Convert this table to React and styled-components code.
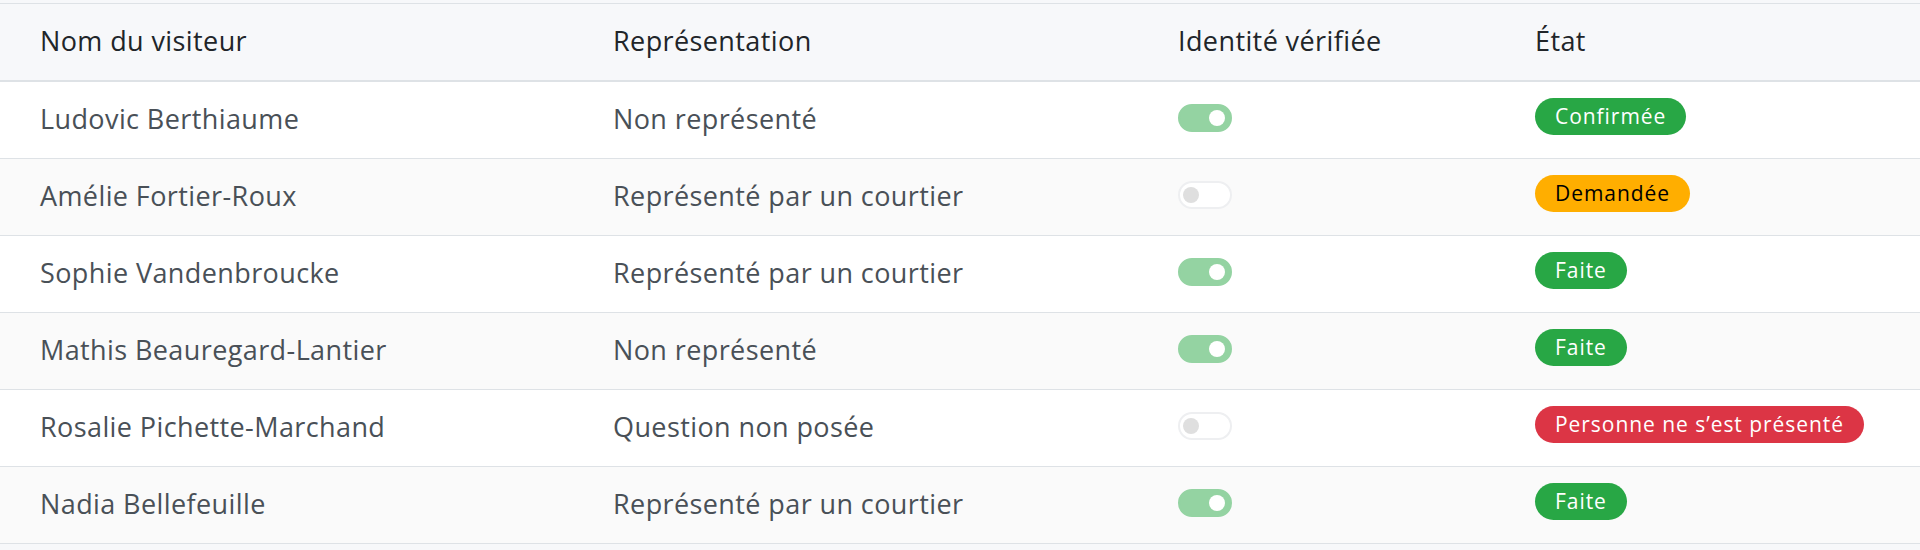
import styled, { createGlobalStyle } from 'styled-components';

const GlobalStyle = createGlobalStyle`
  body {
    margin: 0;
    background: #f7f8fa;
    font-family: "Open Sans", Lato, sans-serif;
  }
`;

const visitors = [
  { name: 'Ludovic Berthiaume', rep: 'Non représenté', verified: true, state: 'confirmed' },
  { name: 'Amélie Fortier-Roux', rep: 'Représenté par un courtier', verified: false, state: 'requested' },
  { name: 'Sophie Vandenbroucke', rep: 'Représenté par un courtier', verified: true, state: 'done' },
  { name: 'Mathis Beauregard-Lantier', rep: 'Non représenté', verified: true, state: 'done' },
  { name: 'Rosalie Pichette-Marchand', rep: 'Question non posée', verified: false, state: 'noshow' },
  { name: 'Nadia Bellefeuille', rep: 'Représenté par un courtier', verified: true, state: 'done' },
];

const states = {
  confirmed: { label: 'Confirmée', bg: '#28a745', color: '#fff' },
  requested: { label: 'Demandée', bg: '#ffae00', color: '#000' },
  done: { label: 'Faite', bg: '#28a745', color: '#fff' },
  noshow: { label: 'Personne ne s’est présenté', bg: '#dc3545', color: '#fff' },
};

const App = () => {
  return (
    <>
      <GlobalStyle />
      <Table>
        <HeadRow>
          <HeadCell>Nom du visiteur</HeadCell>
          <HeadCell>Représentation</HeadCell>
          <HeadCell>Identité vérifiée</HeadCell>
          <HeadCell>État</HeadCell>
        </HeadRow>
        {visitors.map((v, i) => (
          <Row key={v.name} $striped={i % 2 === 1}>
            <Cell>{v.name}</Cell>
            <Cell>{v.rep}</Cell>
            <Cell>
              <Switch $on={v.verified} />
            </Cell>
            <Cell>
              <Badge $bg={states[v.state].bg} $color={states[v.state].color}>
                {states[v.state].label}
              </Badge>
            </Cell>
          </Row>
        ))}
      </Table>
    </>
  );
};

export default App;

const Table = styled.div`
  margin-top: 3px;
  border-top: 1px solid #dee2e6;
  background: #fff;
`;

const columns = '573px 565px 357px 1fr';

const HeadRow = styled.div`
  display: grid;
  box-sizing: border-box;
  grid-template-columns: ${columns};
  height: 78px;
  padding-bottom: 4px;
  align-items: center;
  background: #f7f8fa;
  border-bottom: 2px solid #dee2e6;
`;

const HeadCell = styled.div`
  padding-left: 40px;
  font-size: 27px;
  font-weight: 500;
  letter-spacing: 0.4px;
  color: #212529;
`;

const Row = styled.div`
  display: grid;
  box-sizing: border-box;
  grid-template-columns: ${columns};
  height: 77px;
  padding-bottom: 4px;
  align-items: center;
  background: ${props => (props.$striped ? '#fafafa' : '#fff')};
  border-bottom: 1px solid #dee2e6;
`;

const Cell = styled.div`
  padding-left: 40px;
  font-size: 27px;
  letter-spacing: 0.4px;
  color: #495057;
  display: flex;
  align-items: center;
`;

const Switch = styled.span`
  position: relative;
  box-sizing: border-box;
  width: 54px;
  height: 28px;
  border-radius: 14px;
  background: ${props => (props.$on ? '#94d3a2' : '#fff')};
  border: 2px solid ${props => (props.$on ? '#94d3a2' : '#eeeff1')};

  &::after {
    content: '';
    position: absolute;
    top: 4px;
    left: ${props => (props.$on ? '29px' : '3px')};
    width: 16px;
    height: 16px;
    border-radius: 50%;
    background: ${props => (props.$on ? '#fff' : '#dfdfdf')};
  }
`;

const Badge = styled.span`
  display: inline-block;
  margin-bottom: 4px;
  padding: 6px 20px;
  border-radius: 19px;
  font-size: 21px;
  line-height: 25px;
  letter-spacing: 0.95px;
  background: ${props => props.$bg};
  color: ${props => props.$color};
`;
